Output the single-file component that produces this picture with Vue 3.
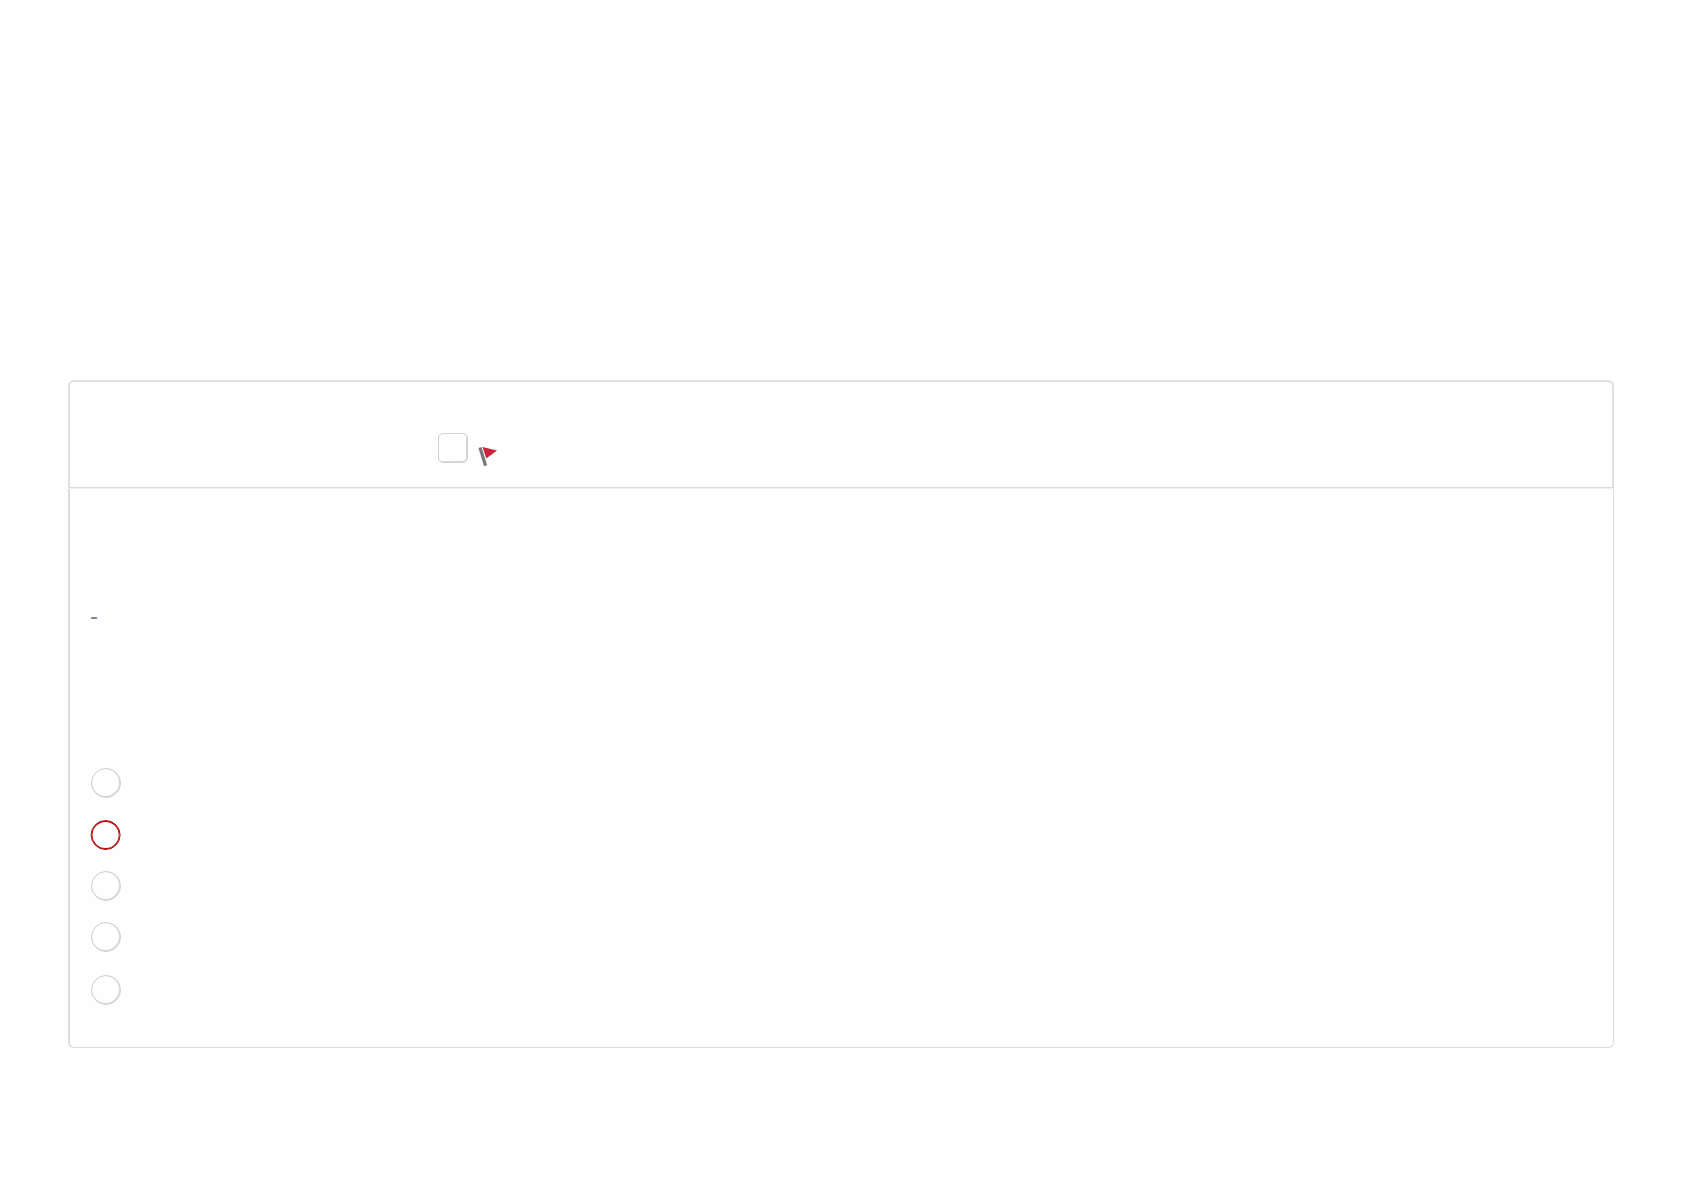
<template>
  <main class="page">
    <section class="question">
      <header class="question-header">
        <label class="flag">
          <input v-model="flagged" class="flag-box" type="checkbox" aria-label="Flag question">
          <svg class="flag-icon" width="20" height="22" viewBox="0 0 20 22">
            <path d="M2 1.5L7.6 19.8" fill="none" stroke="#777" stroke-width="3.2" />
            <path d="M4.5 0.9L19 4.6L8.3 12.5Z" fill="#c8243b" />
          </svg>
        </label>
      </header>

      <div class="question-body">
        <p class="question-text">-</p>

        <div class="answers">
          <input
            v-for="answer in answers"
            :key="answer.id"
            v-model="selected"
            class="answer"
            :class="{ 'answer-marked': answer.marked }"
            type="radio"
            name="answer"
            :value="answer.id"
            :aria-label="`Answer ${answer.id}`"
          >
        </div>
      </div>
    </section>
  </main>
</template>

<script setup>
import { ref } from 'vue';

const flagged = ref(false);
const selected = ref(null);

const answers = [
  { id: 1, marked: false },
  { id: 2, marked: true },
  { id: 3, marked: false },
  { id: 4, marked: false },
  { id: 5, marked: false }
];
</script>

<style>
body {
  background: #fefefe;
}
</style>

<style scoped>
.page {
  box-sizing: border-box;
  min-height: 1188px;
  padding: 380px 68px 0;
  font-family: "Liberation Sans", Arial, sans-serif;
}
.question {
  box-sizing: border-box;
  height: 668px;
}
.question-header {
  box-sizing: border-box;
  height: 108px;
  padding: 51px 0 0 368px;
  border: 2px solid #dfe0e0;
  border-bottom: 1px solid #dadada;
  border-radius: 6px 6px 0 0;
  box-shadow: 0 1px 0 #f1f1f1;
}
.flag {
  display: flex;
  align-items: flex-start;
  width: max-content;
}
.flag-box {
  appearance: none;
  box-sizing: border-box;
  width: 30px;
  height: 30px;
  margin: 0;
  border: 1px solid #d2d2d2;
  border-radius: 5px;
  box-shadow: inset -0.5px -0.5px 0 0.5px #dadada;
}
.flag-icon {
  margin: 13px 0 0 10px;
}
.question-body {
  box-sizing: border-box;
  height: 559px;
  margin-top: 1px;
  padding: 113px 20px 0;
  border: 1px solid #dcdcdc;
  border-top: 0;
  border-left-width: 2px;
  border-radius: 0 0 6px 6px;
}
.question-text {
  height: 28px;
  margin: 0;
  color: #7f868c;
  font-size: 24px;
  line-height: 28px;
}
.answers {
  display: grid;
  grid-template-rows: 52px 51px 51px 53px 30px;
  padding: 138px 0 0 1px;
}
.answer {
  appearance: none;
  box-sizing: border-box;
  width: 30px;
  height: 30px;
  margin: 0;
  border: 1px solid #cecece;
  border-radius: 50%;
  box-shadow: inset -0.5px -0.5px 0 0.5px #d8d8d8;
}
.answer-marked {
  border-color: #b30000;
  box-shadow: inset 0 0 0 0.9px #b30000;
  transform: translateX(-0.4px);
}
</style>
